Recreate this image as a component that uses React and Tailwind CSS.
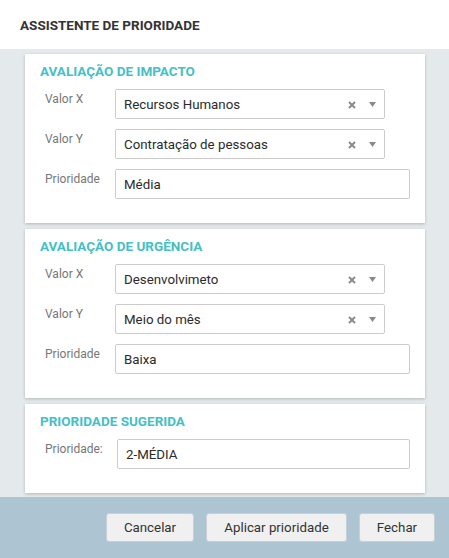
import React from 'react';

const font = { fontFamily: 'Roboto, "Liberation Sans", sans-serif' };

function SelectBox({ value }) {
  return (
    <div className="flex h-[30px] w-[270px] items-center rounded-[2px] border border-[#cccccc] bg-white pl-[8px] pr-[8px] pt-[1px]">
      <span className="flex-1 truncate text-[13.3px] text-[#2b2b2b]">{value}</span>
      <svg width="8" height="8" viewBox="0 0 8 8" className="mr-[13px]">
        <path d="M1 1L7 7M7 1L1 7" stroke="#8a8a8a" strokeWidth="2" />
      </svg>
      <svg width="7" height="5" viewBox="0 0 7 5">
        <path d="M0 0H7L3.5 5Z" fill="#8a8a8a" />
      </svg>
    </div>
  );
}

function TextBox({ value, wide }) {
  return (
    <div className={'flex h-[30px] items-center rounded-[2px] border border-[#cccccc] bg-white pl-[8px] pt-[1px] ' + (wide ? 'w-[295px]' : 'w-[293px]')}>
      <span className="text-[13.3px] text-[#2b2b2b]">{value}</span>
    </div>
  );
}

function Row({ label, children, labelWidth = 'w-[75px]' }) {
  return (
    <div className="flex items-start">
      <span className={labelWidth + ' shrink-0 pt-[3px] pl-[5px] text-[12px] leading-[14px] text-[#777777]'}>{label}</span>
      {children}
    </div>
  );
}

function Card({ title, children }) {
  return (
    <div className="bg-white pl-[15px] pt-[6px] pb-[24px] shadow-[0_1px_3px_rgba(0,0,0,0.22)]">
      <h2 className="text-[13.5px] font-bold leading-[22px] text-[#45c0c6]">{title}</h2>
      <div className="mt-[7px] flex flex-col gap-[10px]">{children}</div>
    </div>
  );
}

export default function App() {
  return (
    <div className="flex h-[558px] w-[449px] flex-col bg-white" style={font}>
      <div className="flex h-[49px] items-center pl-[20px] pt-[1px]">
        <h1 className="text-[13.5px] font-bold text-[#333333]">ASSISTENTE DE PRIORIDADE</h1>
      </div>

      <div className="flex flex-col gap-[6px] bg-[#e4e9ec] pt-[5px] pb-[4px] pl-[25px] pr-[24px]">
        <Card title="AVALIAÇÃO DE IMPACTO">
          <Row label="Valor X"><SelectBox value="Recursos Humanos" /></Row>
          <Row label="Valor Y"><SelectBox value="Contratação de pessoas" /></Row>
          <Row label="Prioridade"><TextBox value="Média" wide /></Row>
        </Card>
        <Card title="AVALIAÇÃO DE URGÊNCIA">
          <Row label="Valor X"><SelectBox value="Desenvolvimeto" /></Row>
          <Row label="Valor Y"><SelectBox value="Meio do mês" /></Row>
          <Row label="Prioridade"><TextBox value="Baixa" wide /></Row>
        </Card>
        <Card title="PRIORIDADE SUGERIDA">
          <Row label="Prioridade:" labelWidth="w-[77px]"><TextBox value="2-MÉDIA" /></Row>
        </Card>
      </div>

      <div className="flex flex-1 items-start justify-end gap-[12px] bg-[#adc5d3] pt-[16px] pr-[14px]">
        <button className="h-[29px] w-[88px] rounded-[3px] border border-[#c8d0d5] bg-[#f0f0f0] text-[13.3px] text-[#333333]">Cancelar</button>
        <button className="h-[29px] w-[141px] rounded-[3px] border border-[#c8d0d5] bg-[#f0f0f0] text-[13.3px] text-[#333333]">Aplicar prioridade</button>
        <button className="h-[29px] w-[76px] rounded-[3px] border border-[#c8d0d5] bg-[#f0f0f0] text-[13.3px] text-[#333333]">Fechar</button>
      </div>
    </div>
  );
}
